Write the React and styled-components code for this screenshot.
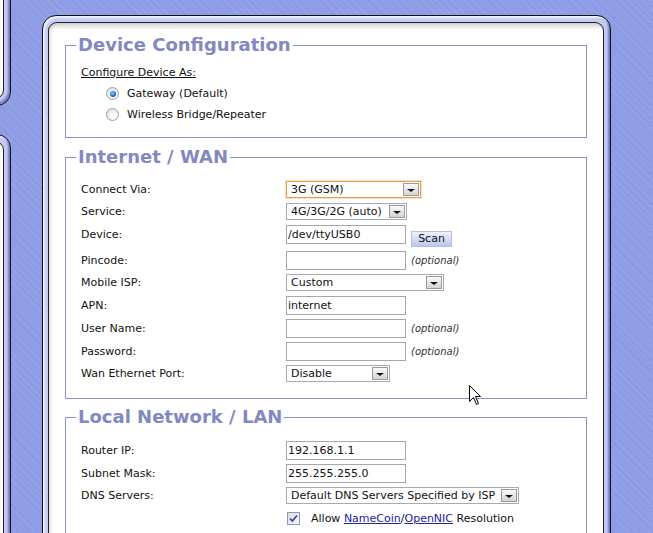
import React from 'react';
import styled, { createGlobalStyle, css } from 'styled-components';

const GlobalStyle = createGlobalStyle`
  html, body {
    margin: 0;
    padding: 0;
    height: 100%;
    overflow: hidden;
  }
  body {
    background-color: #8f9de6;
    background-image:
      repeating-linear-gradient(45deg, rgba(255, 255, 255, 0.07) 0 1px, transparent 1px 5px),
      repeating-linear-gradient(45deg, rgba(60, 70, 160, 0.06) 0 1px, transparent 1px 7px);
    font-family: "DejaVu Sans", Verdana, sans-serif;
    font-size: 11px;
    color: #111;
  }
`;

const frame = css`
  box-sizing: border-box;
  border: 1px solid #111;
  border-radius: 14px;
  background: #c4caf6;
  box-shadow:
    inset -2px -2px 2px rgba(50, 60, 150, 0.55),
    inset 2px 2px 2px rgba(255, 255, 255, 0.75);
`;

const Page = styled.div`
  position: relative;
  display: flex;
  align-items: flex-start;
  height: 100vh;
`;

const Sidebar = styled.div`
  width: 11px;
  flex-shrink: 0;
  display: flex;
  flex-direction: column;
  gap: 28px;
  margin-top: -30px;
`;

const SideFrame = styled.div`
  ${frame}
  width: 200px;
  height: ${(p) => p.$h}px;
  margin-left: -189px;
  padding: 6px;

  &::after {
    content: '';
    display: block;
    height: 100%;
    box-sizing: border-box;
    border: 1px solid #222;
    border-radius: 9px;
    background: #fafafa;
  }
`;

const MainFrame = styled.div`
  ${frame}
  width: 569px;
  height: 580px;
  margin: 15px 0 0 31px;
  padding: 6px 6px 0 5px;
`;

const MainInner = styled.div`
  box-sizing: border-box;
  height: 100%;
  border: 1px solid #222;
  border-bottom: none;
  border-radius: 9px 9px 0 0;
  background: linear-gradient(#d2d2d2, #fff 7px);
  box-shadow: inset 3px 0 4px -2px rgba(0, 0, 0, 0.18);
  padding: 11px 16px 0;
`;

const Fieldset = styled.fieldset`
  border: 1px solid #8e91c6;
  margin: 0 0 ${(p) => p.$mb || 8}px;
  padding: ${(p) => p.$pt || 13}px 15px ${(p) => p.$pb || 12}px;
  min-width: 0;
`;

const Legend = styled.legend`
  margin-left: -5px;
  padding: 0 2px;
  font-size: 18px;
  line-height: 22px;
  font-weight: bold;
  color: #8488c0;
`;

const Heading = styled.div`
  line-height: 13px;
  text-decoration: underline;
  margin-top: -3px;
  margin-bottom: 4px;
`;

const RadioRow = styled.label`
  display: flex;
  align-items: center;
  gap: 8px;
  height: 21px;
  padding-left: 25px;
`;

const Radio = styled.span`
  width: 13px;
  height: 13px;
  box-sizing: border-box;
  border-radius: 50%;
  border: 1px solid #9da3ab;
  background: radial-gradient(circle at 60% 65%, #ffffff 20%, #d8d9dc 90%);
  display: flex;
  align-items: center;
  justify-content: center;

  &::after {
    content: '';
    display: ${(p) => (p.$checked ? 'block' : 'none')};
    width: 6px;
    height: 6px;
    border-radius: 50%;
    background: radial-gradient(circle at 40% 35%, #8ad0ff, #1a72c8 55%, #0a3c7e);
  }
`;

const Rows = styled.div`
  display: flex;
  flex-direction: column;
  gap: 4px;
`;

const Row = styled.div`
  display: grid;
  grid-template-columns: 205px 1fr;
  align-items: start;
  min-height: ${(p) => p.$h}px;
`;

const Label = styled.span`
  line-height: ${(p) => p.$lh}px;
  white-space: nowrap;
`;

const Field = styled.div`
  display: flex;
  align-items: ${(p) => p.$align || 'center'};
`;

const Input = styled.div`
  box-sizing: border-box;
  width: 120px;
  height: 19px;
  border: 1px solid #a7a7a7;
  background: #fff;
  padding-left: 1px;
  line-height: 17px;
  white-space: nowrap;
  overflow: hidden;
`;

const SelectBox = styled.div`
  box-sizing: border-box;
  display: flex;
  align-items: center;
  width: ${(p) => p.$w}px;
  height: 17px;
  border: 1px solid ${(p) => (p.$focus ? '#e2a24c' : '#a6abb3')};
  box-shadow: ${(p) => (p.$focus ? '0 0 0 1px rgba(240, 190, 110, 0.45)' : 'none')};
  background: #fff;
  padding: 0 1px 0 4px;
`;

const SelectText = styled.span`
  flex: 1;
  white-space: nowrap;
  overflow: hidden;
  line-height: 15px;
`;

const Arrow = styled.span`
  width: 16px;
  height: 13px;
  box-sizing: border-box;
  border: 1px solid #9a9a9a;
  background: linear-gradient(#fafafa, #d4d4d4);
  display: flex;
  align-items: flex-end;
  justify-content: center;
  padding-bottom: 3px;

  &::after {
    content: '';
    border-left: 4px solid transparent;
    border-right: 4px solid transparent;
    border-top: 3px solid #111;
  }
`;

const ScanButton = styled.button`
  box-sizing: border-box;
  margin: 6px 0 0 5px;
  width: 41px;
  height: 16px;
  padding: 0;
  border: 1px solid #b3bfe3;
  background: linear-gradient(#eef2fb, #bcc8ea);
  font-family: inherit;
  font-size: 11px;
  color: #111;
  line-height: 14px;
`;

const Optional = styled.span`
  margin-left: 5px;
  font-size: 10px;
  line-height: 19px;
  font-style: italic;
  color: #333;
`;

const CheckRow = styled.label`
  display: flex;
  align-items: center;
  gap: 11px;
  height: 18px;
  padding-left: 1px;
  white-space: nowrap;
`;

const Check = styled.span`
  width: 13px;
  height: 13px;
  box-sizing: border-box;
  border: 1px solid #8e98b4;
  background: linear-gradient(135deg, #d9dbe2, #f8f8fa);
  display: flex;
  align-items: center;
  justify-content: center;
`;

const Link = styled.a`
  color: #23239a;
  text-decoration: underline;
`;

const Cursor = styled.svg`
  position: absolute;
  left: 469px;
  top: 385px;
`;

const Select = ({ w, focus, children }) => (
  <SelectBox $w={w} $focus={focus}>
    <SelectText>{children}</SelectText>
    <Arrow />
  </SelectBox>
);

const InputRow = ({ label, value, optional, children }) => (
  <Row $h={19}>
    <Label $lh={19}>{label}</Label>
    <Field $align="flex-start">
      <Input>{value}</Input>
      {optional && <Optional>(optional)</Optional>}
      {children}
    </Field>
  </Row>
);

const SelectRow = ({ label, w, focus, value }) => (
  <Row $h={18}>
    <Label $lh={17}>{label}</Label>
    <Field>
      <Select w={w} focus={focus}>
        {value}
      </Select>
    </Field>
  </Row>
);

export default function App() {
  return (
    <>
      <GlobalStyle />
      <Page>
        <Sidebar>
          <SideFrame $h={136} />
          <SideFrame $h={500} />
        </Sidebar>

        <MainFrame>
          <MainInner>
            <Fieldset $pb={12}>
              <Legend>Device Configuration</Legend>
              <Heading>Configure Device As:</Heading>
              <RadioRow>
                <Radio $checked />
                Gateway (Default)
              </RadioRow>
              <RadioRow>
                <Radio />
                Wireless Bridge/Repeater
              </RadioRow>
            </Fieldset>

            <Fieldset $pb={15} $mb={7}>
              <Legend>Internet / WAN</Legend>
              <Rows>
                <SelectRow label="Connect Via:" w={135} focus value="3G (GSM)" />
                <SelectRow label="Service:" w={121} value="4G/3G/2G (auto)" />
                <InputRow label="Device:" value="/dev/ttyUSB0">
                  <ScanButton type="button">Scan</ScanButton>
                </InputRow>
                <InputRow label="Pincode:" optional />
                <SelectRow label="Mobile ISP:" w={158} value="Custom" />
                <InputRow label="APN:" value="internet" />
                <InputRow label="User Name:" optional />
                <InputRow label="Password:" optional />
                <SelectRow label="Wan Ethernet Port:" w={104} value="Disable" />
              </Rows>
            </Fieldset>

            <Fieldset>
              <Legend>Local Network / LAN</Legend>
              <Rows>
                <InputRow label="Router IP:" value="192.168.1.1" />
                <InputRow label="Subnet Mask:" value="255.255.255.0" />
                <SelectRow
                  label="DNS Servers:"
                  w={233}
                  value="Default DNS Servers Specified by ISP"
                />
                <Row $h={18}>
                  <span />
                  <CheckRow>
                    <Check>
                      <svg width="9" height="9" viewBox="0 0 9 9">
                        <path
                          d="M1 4.5 L3.4 7 L8 1.5"
                          fill="none"
                          stroke="#3447a6"
                          strokeWidth="1.8"
                        />
                      </svg>
                    </Check>
                    <span>
                      Allow <Link>NameCoin</Link>/<Link>OpenNIC</Link> Resolution
                    </span>
                  </CheckRow>
                </Row>
                <Row $h={18}>
                  <span />
                  <CheckRow>
                    <Check />
                    <span>Force Clients To Use Router DNS Servers</span>
                  </CheckRow>
                </Row>
              </Rows>
            </Fieldset>
          </MainInner>
        </MainFrame>

        <Cursor width="13" height="21" viewBox="0 0 13 21">
          <path
            d="M0.5 0.5 L0.5 16.5 L4.5 12.5 L7.5 19.5 L9.5 18.5 L6.5 11.5 L11.5 11.5 Z"
            fill="#fff"
            stroke="#000"
            strokeWidth="1"
          />
        </Cursor>
      </Page>
    </>
  );
}
